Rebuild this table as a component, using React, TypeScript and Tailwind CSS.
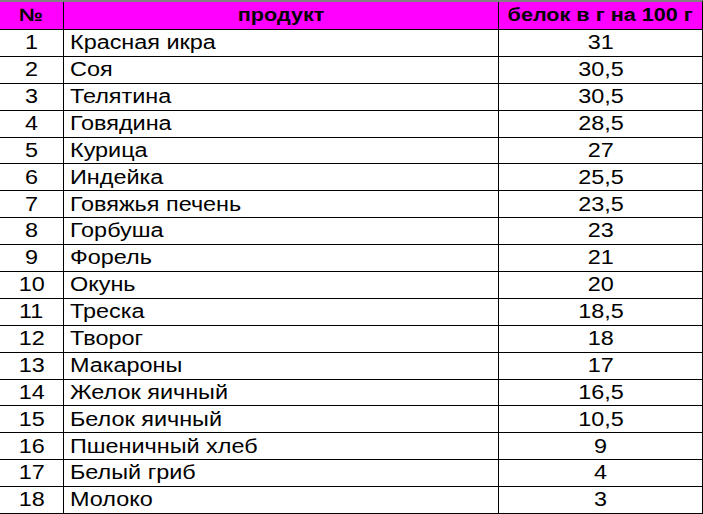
import React from 'react'

const rows: [string, string][] = [
  ['Красная икра', '31'],
  ['Соя', '30,5'],
  ['Телятина', '30,5'],
  ['Говядина', '28,5'],
  ['Курица', '27'],
  ['Индейка', '25,5'],
  ['Говяжья печень', '23,5'],
  ['Горбуша', '23'],
  ['Форель', '21'],
  ['Окунь', '20'],
  ['Треска', '18,5'],
  ['Творог', '18'],
  ['Макароны', '17'],
  ['Желок яичный', '16,5'],
  ['Белок яичный', '10,5'],
  ['Пшеничный хлеб', '9'],
  ['Белый гриб', '4'],
  ['Молоко', '3'],
]

// the sheet is a bit stretched sideways, so glyphs get scale-x
const App = () => {
  return (
    <div
      className="w-[703px] h-[514px] bg-white text-black overflow-hidden"
      style={{ fontFamily: '"Liberation Sans", Arial, sans-serif' }}
    >
      <div className="grid grid-cols-[64px_435px_203px] grid-rows-[28px_repeat(18,26.9px)] border-t-2 border-[#808080] w-[703px] border-r border-r-black">
        {/* header */}
        <div className="bg-[#ff00ff] border-r border-b border-black flex items-center justify-center font-bold text-[18px]">
          <span className="inline-block scale-x-[1.2]">№</span>
        </div>
        <div className="bg-[#ff00ff] border-r border-b border-black flex items-center justify-center font-bold text-[18px]">
          <span className="inline-block scale-x-[1.2]">продукт</span>
        </div>
        <div className="bg-[#ff00ff] border-b border-black flex items-center justify-center font-bold text-[18px]">
          <span className="inline-block scale-x-[1.2]">белок в г на 100 г</span>
        </div>

        {rows.map(([name, value], i) => (
          <React.Fragment key={i}>
            <div className="border-r border-b border-black flex items-center justify-center text-[19.5px] leading-none">
              <span className="inline-block scale-x-[1.2]">{i + 1}</span>
            </div>
            <div className="border-r border-b border-black flex items-center pl-[6px] text-[19.5px] leading-none">
              <span className="inline-block scale-x-[1.2] origin-left">{name}</span>
            </div>
            <div className="border-b border-black flex items-center justify-center text-[19.5px] leading-none">
              <span className="inline-block scale-x-[1.2]">{value}</span>
            </div>
          </React.Fragment>
        ))}
      </div>
    </div>
  )
}

export default App
